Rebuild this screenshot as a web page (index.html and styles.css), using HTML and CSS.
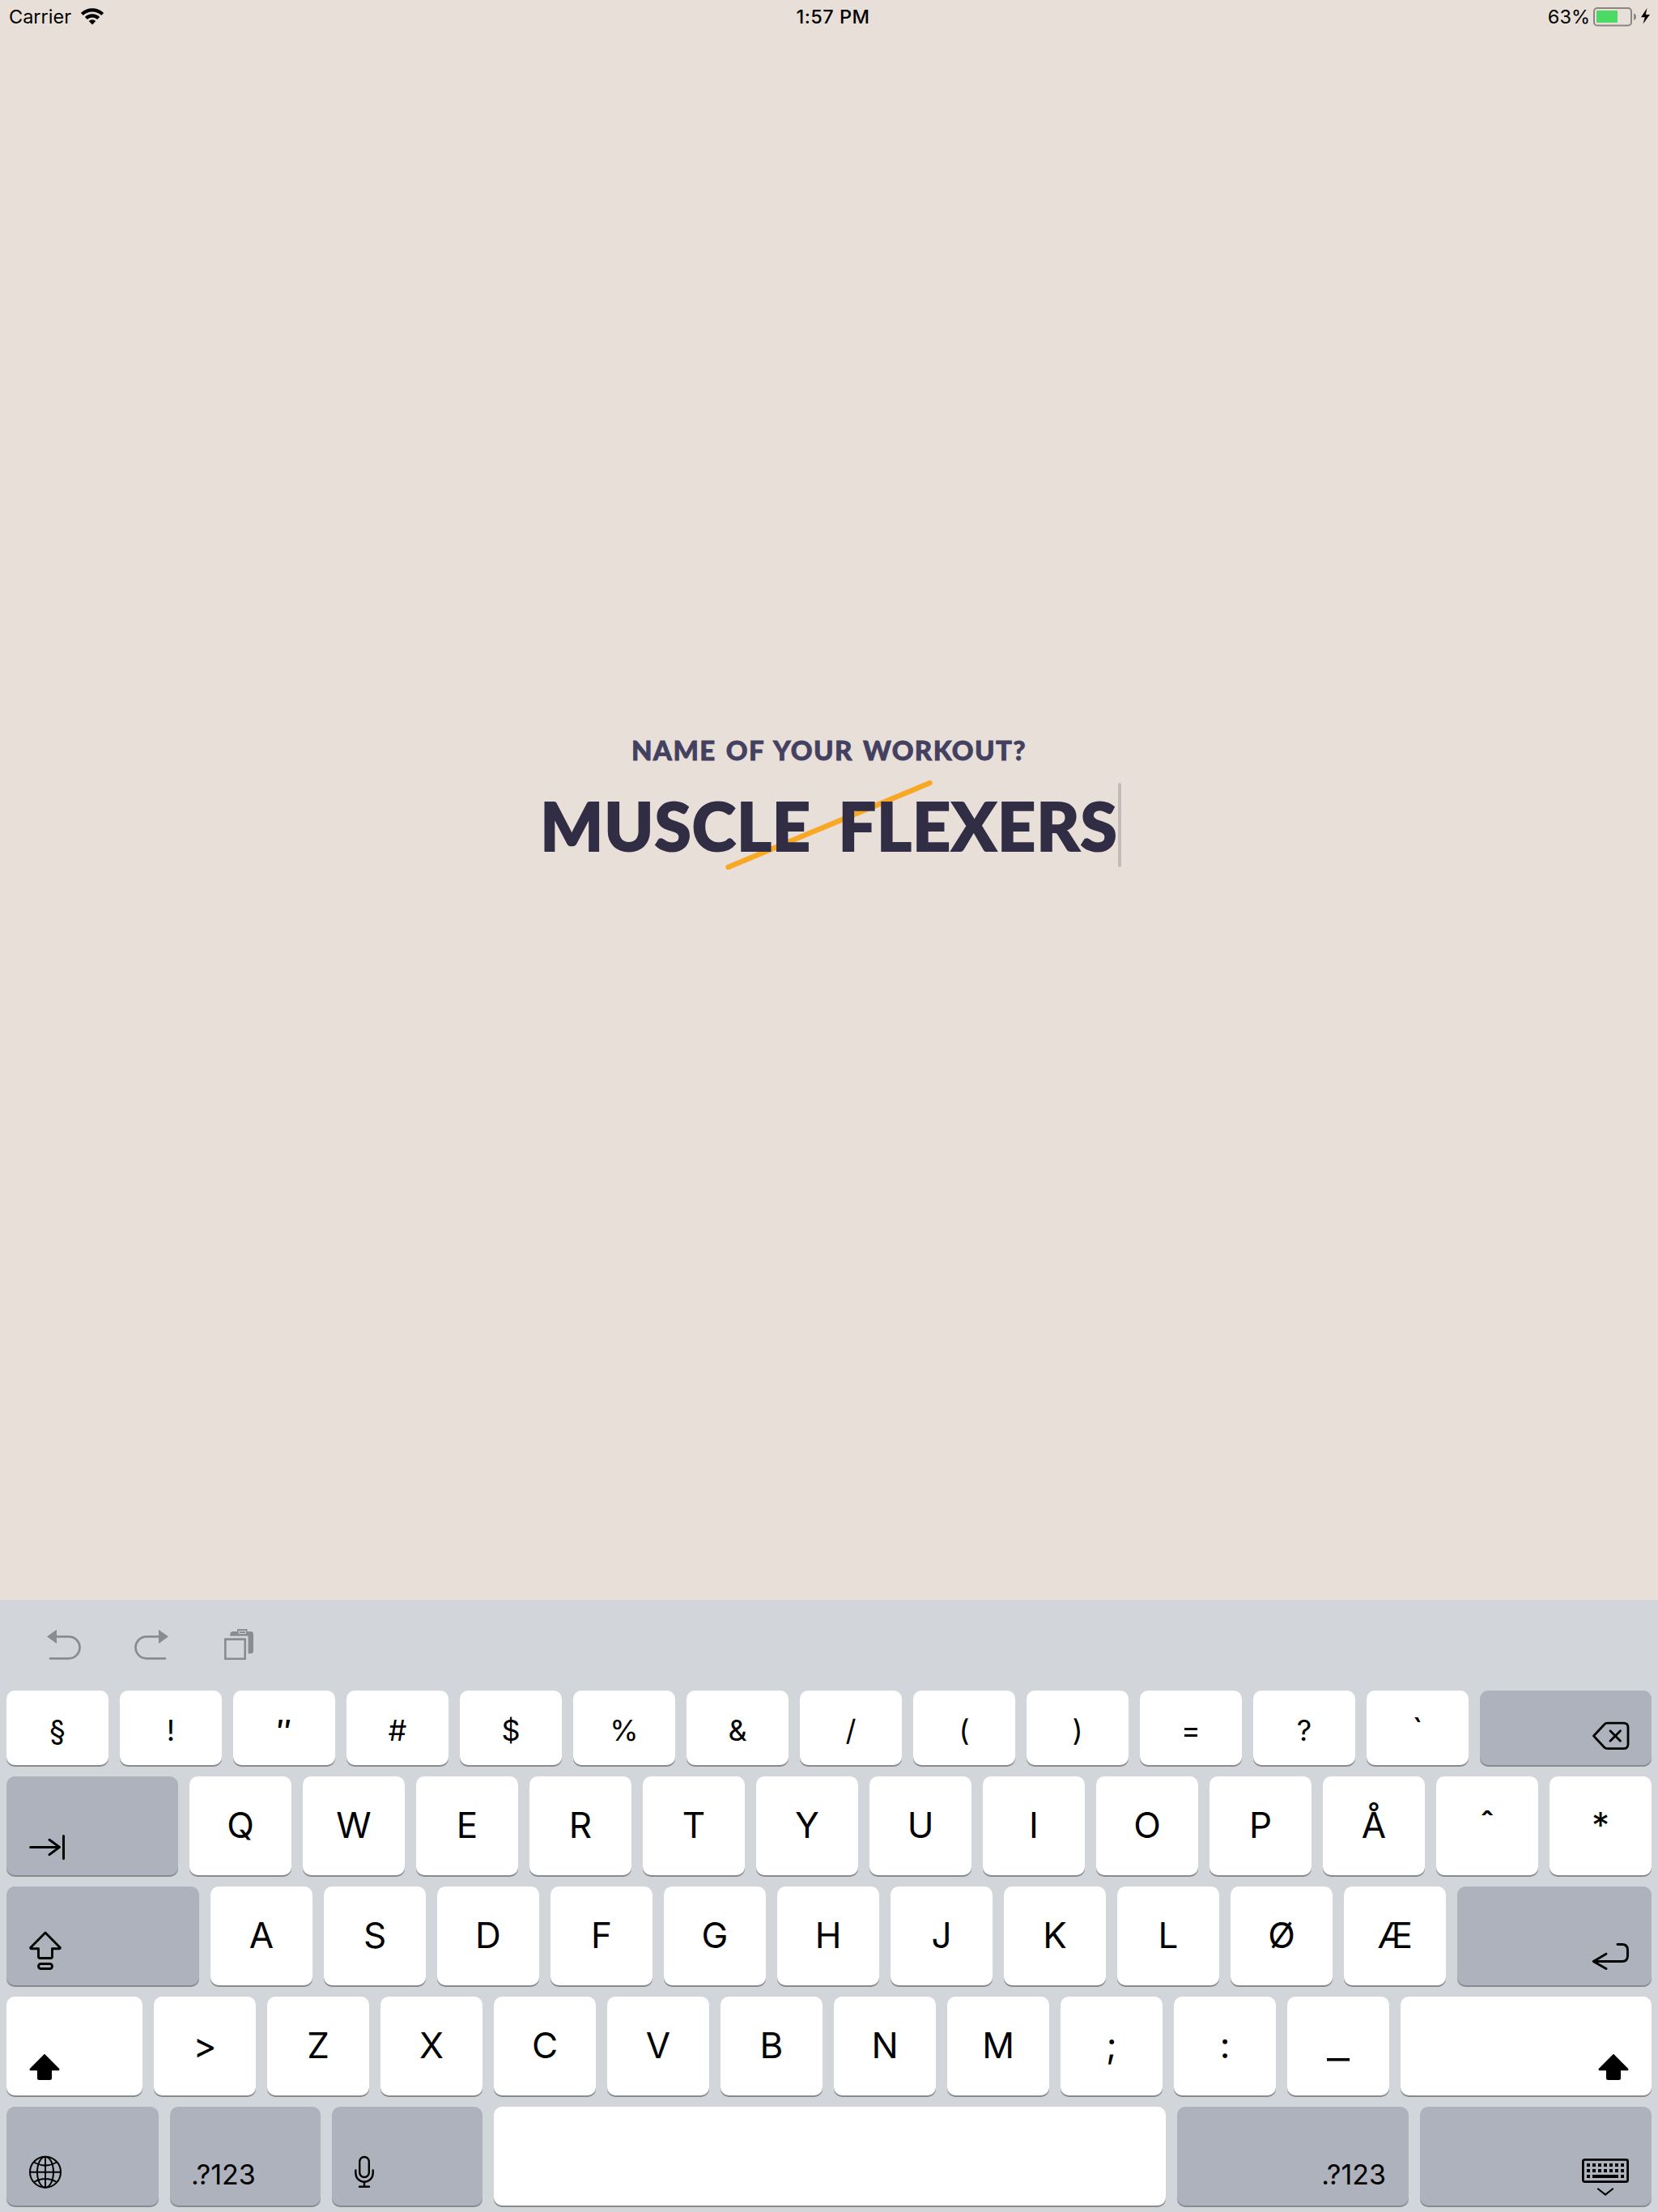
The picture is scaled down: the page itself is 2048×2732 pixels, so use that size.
FILE: index.html
```html
<!DOCTYPE html>
<html lang="en">
<head>
<meta charset="utf-8">
<title>Name of your workout</title>
<link rel="stylesheet" href="styles.css">
</head>
<body>
<div class="screen">
  <header class="status">
    <div class="status-left">
      <span class="carrier">Carrier</span>
      <svg class="wifi" width="28" height="21" viewBox="0 0 28 21"><g fill="none" stroke="#000" stroke-width="4.2"><path d="M1.3 7.6a18 18 0 0 1 25.4 0"/><path d="M6.3 12.6a11 11 0 0 1 15.4 0"/></g><path d="M14 20.4l-4.3-4.3a6.1 6.1 0 0 1 8.6 0z"/></svg>
    </div>
    <div class="time">1:57 PM</div>
    <div class="status-right">
      <span class="percent">63%</span>
      <svg class="battery" width="71" height="24" viewBox="0 0 71 24"><rect x="1" y="1" width="46" height="21.400" rx="4" fill="none" stroke="#8b8583" stroke-width="2"/><rect x="4" y="4" width="26" height="15" rx="1" fill="#4cd964"/><path d="M50 7.500q3 1 3 4.200t-3 4.200z" fill="#8b8583"/><path d="M66.500 1L59 12.200h4.800L61.500 20.500 70 9h-5.200z"/></svg>
    </div>
  </header>

  <main class="workout">
    <h1 class="prompt">NAME OF YOUR WORKOUT?</h1>
    <div class="field">
      <svg class="slash" width="260" height="112" viewBox="0 0 260 112"><path d="M5.600 108L254.500 4" stroke="#f9a825" stroke-width="6.500" stroke-linecap="round"/></svg>
      <span class="value">MUSCLE FLEXERS</span>
      <span class="caret"></span>
    </div>
  </main>

  <section class="keyboard">
    <div class="toolbar">
      <svg width="42" height="38" viewBox="0 0 42 38"><path d="M11 9.300h16a13.500 13.500 0 0 1 0 27H4" fill="none" stroke="#8a8c90" stroke-width="2.700" stroke-linecap="round"/><path d="M0 9.300L12 .7v17.300z" fill="#8a8c90"/></svg>
      <svg width="42" height="38" viewBox="0 0 42 38"><path d="M31 9.300H15a13.500 13.500 0 0 0 0 27h23" fill="none" stroke="#8a8c90" stroke-width="2.700" stroke-linecap="round"/><path d="M42 9.300L30 .7v17.300z" fill="#8a8c90"/></svg>
      <svg class="paste" width="36" height="38" viewBox="0 0 36 38"><path d="M7.300 8.500V6.500q0-3.500 3.500-3.500H32.500q3.500 0 3.500 3.500V27q0 3.300-3.300 3.300H29.500V8.500z" fill="#8a8c90"/><path d="M16 0h12.500v6H16z" fill="#8a8c90"/><path d="M18 2.500h8.600v3H18z" fill="none" stroke="#d2d5da" stroke-width="1"/><path d="M1.300 12.600h24.400v24.100H1.300z" fill="none" stroke="#8a8c90" stroke-width="2.600"/></svg>
    </div>
    <div class="row numbers">
      <div class="key">§</div><div class="key">!</div><div class="key quote">″</div><div class="key">#</div><div class="key">$</div><div class="key">%</div><div class="key">&amp;</div><div class="key">/</div><div class="key">(</div><div class="key">)</div><div class="key">=</div><div class="key">?</div><div class="key grave">`</div>
      <div class="key fn right grow"><svg width="46" height="36" viewBox="0 0 46 36"><g fill="none" stroke="#000" stroke-width="2.800" stroke-linecap="round" stroke-linejoin="round"><path d="M2.500 18L15.600 4Q17.200 2.200 19.500 2.200H39.500Q45 2.200 45 7.700V28.300Q45 33.700 39.500 33.700H19.500Q17.200 33.700 15.600 32z"/><path d="M23 11.700l12.500 12.500M35.500 11.700L23 24.200"/></g></svg></div>
    </div>
    <div class="row">
      <div class="key fn left grow"><svg width="46" height="33" viewBox="0 0 46 33"><g fill="none" stroke="#000" stroke-width="3" stroke-linecap="round" stroke-linejoin="round"><path d="M1.600 16.400h35.500M25 7.300l12.500 9.100L25 25.600M42.500 2.500v28"/></g></svg></div>
      <div class="key">Q</div><div class="key">W</div><div class="key">E</div><div class="key">R</div><div class="key">T</div><div class="key">Y</div><div class="key">U</div><div class="key">I</div><div class="key">O</div><div class="key">P</div><div class="key">Å</div><div class="key">ˆ</div><div class="key">*</div>
    </div>
    <div class="row">
      <div class="key fn left caps"><svg width="40" height="50" viewBox="0 0 40 50"><g fill="none" stroke="#000" stroke-width="2.900" stroke-linecap="round" stroke-linejoin="round"><path d="M20 3L1.700 21.500Q1.500 22.700 3 22.700H11.500V32.500Q11.500 34.500 13.500 34.500H26.500Q28.500 34.500 28.500 32.500V22.700H37Q38.500 22.700 38.300 21.500z"/><rect x="11.500" y="41.500" width="17" height="6" rx="3"/></g></svg></div>
      <div class="key">A</div><div class="key">S</div><div class="key">D</div><div class="key">F</div><div class="key">G</div><div class="key">H</div><div class="key">J</div><div class="key">K</div><div class="key">L</div><div class="key">Ø</div><div class="key">Æ</div>
      <div class="key fn right grow"><svg width="46" height="36" viewBox="0 0 46 36"><g fill="none" stroke="#000" stroke-width="2.900" stroke-linecap="round" stroke-linejoin="round"><path d="M32 3.500h5.500Q44.500 3.500 44.500 10.500V17.500Q44.500 24.500 37.500 24.500H2.500M18 15.200L2.200 24.500 18 33.500"/></g></svg></div>
    </div>
    <div class="row">
      <div class="key left shift"><svg width="38" height="34" viewBox="0 0 38 34"><path d="M19 .7L.8 19Q0 21.200 1.800 21.200H10V30.500Q10 33 12.500 33H25.500Q28 33 28 30.500V21.200H36.200Q38 21.200 37.200 19z"/></svg></div>
      <div class="key">&gt;</div><div class="key">Z</div><div class="key">X</div><div class="key">C</div><div class="key">V</div><div class="key">B</div><div class="key">N</div><div class="key">M</div><div class="key">;</div><div class="key">:</div><div class="key"><span class="underscore">_</span></div>
      <div class="key right grow"><svg width="38" height="34" viewBox="0 0 38 34"><path d="M19 .7L.8 19Q0 21.200 1.800 21.200H10V30.500Q10 33 12.500 33H25.500Q28 33 28 30.500V21.200H36.200Q38 21.200 37.200 19z"/></svg></div>
    </div>
    <div class="row">
      <div class="key fn left globe"><svg width="40" height="42" viewBox="0 0 40 42"><g fill="none" stroke="#000" stroke-width="2"><circle cx="20" cy="20.700" r="19"/><ellipse cx="20" cy="20.700" rx="10" ry="19"/><path d="M20 1.700v38M1 20.700h38M6 8.500q14 8 28 0M6 33q14-8 28 0"/></g></svg></div>
      <div class="key fn left mode">.?123</div>
      <div class="key fn left mode mic"><svg width="24" height="42" viewBox="0 0 24 42"><g fill="none" stroke="#000" stroke-width="2.400" stroke-linecap="round"><rect x="6.200" y="2" width="11.600" height="25" rx="5.800"/><path d="M1.300 18.500v3.500a10.700 10.700 0 0 0 21.400 0v-3.500M12 33v5M6 38.800h12"/></g></svg></div>
      <div class="key grow"></div>
      <div class="key fn right wide">.?123</div>
      <div class="key fn right wide dismiss"><svg width="58" height="46" viewBox="0 0 58 46"><rect x="1.400" y="1.400" width="55.200" height="27.200" rx="2" fill="none" stroke="#000" stroke-width="2.800"/><path d="M6 8h46M6 15h46" stroke="#000" stroke-width="4" stroke-dasharray="4 3"/><path d="M6 22h4M13 22h32M48 22h4" stroke="#000" stroke-width="4"/><path d="M20 37.500l9 7 9-7" fill="none" stroke="#000" stroke-width="2.200" stroke-linecap="round"/></svg></div>
    </div>
  </section>
</div>
</body>
</html>
```
FILE: styles.css
```css
body {
  margin: 0;
}

.screen {
  width: 2048px;
  height: 2732px;
  display: flex;
  flex-direction: column;
  background: #e8dfd9;
  color: #000;
  font-family: Inter, "Liberation Sans", sans-serif;
  overflow: hidden;
}

svg {
  display: block;
  flex: none;
  overflow: visible;
}

.status {
  height: 41px;
  display: grid;
  grid-template-columns: 1fr auto 1fr;
  align-items: center;
  padding: 0 9px 0 11px;
  font-size: 23.5px;
  line-height: 41px;
}

.status-left,
.status-right {
  display: flex;
  align-items: center;
}

.status-left {
  gap: 12px;
}

.status-right {
  justify-content: flex-end;
  gap: 4px;
}

.time {
  margin-left: 8px;
  font-weight: 500;
  letter-spacing: 0.5px;
}

.workout {
  flex: 1;
  display: flex;
  flex-direction: column;
  align-items: center;
  padding-top: 865px;
  font-family: Lato, "Open Sans", sans-serif;
  font-weight: 900;
}

.prompt {
  margin: 0;
  font-size: 33px;
  line-height: 40px;
  letter-spacing: 1.4px;
  word-spacing: 3px;
  font-weight: 900;
  color: #434060;
  -webkit-text-stroke: 0.8px #434060;
  white-space: nowrap;
}

.field {
  position: relative;
  display: flex;
  align-items: center;
  height: 104px;
  margin-top: 21px;
  padding-left: 4px;
}

.value {
  position: relative;
  font-size: 82px;
  line-height: 104px;
  letter-spacing: 1.1px;
  word-spacing: 13px;
  color: #312d45;
  -webkit-text-stroke: 2px #312d45;
  white-space: nowrap;
}

.slash {
  position: absolute;
  left: 231px;
  top: -4px;
}

.caret {
  width: 4px;
  height: 104px;
  border-radius: 2px;
  background: #c5babb;
}

.keyboard {
  height: 756px;
  box-sizing: border-box;
  padding: 0 8px 8px;
  display: flex;
  flex-direction: column;
  gap: 14px;
  background: #d2d5da;
}

.toolbar {
  height: 98px;
  box-sizing: border-box;
  padding: 36px 0 0 50px;
  display: flex;
  gap: 66px;
}

.paste {
  margin-left: 3px;
}

.row {
  display: flex;
  gap: 14px;
  height: 122px;
}

.key {
  flex: none;
  width: 126px;
  box-sizing: border-box;
  display: flex;
  justify-content: center;
  border-radius: 10px;
  background: #fff;
  box-shadow: 0 2px 0 #898a8e;
  font-size: 44px;
  line-height: 121px;
}

.numbers {
  height: 92px;
}

.numbers .key {
  font-size: 36px;
  line-height: 99px;
}

.numbers .quote {
  font-weight: 600;
}

.numbers .grave {
  font-size: 42px;
}

.underscore {
  transform: scaleX(1.4);
}

.key.fn {
  background: #aeb2bc;
}

.key.left,
.key.right {
  align-items: flex-end;
  padding: 0 28px 18px;
  font-size: 34px;
  line-height: 40px;
}

.key.left {
  justify-content: flex-start;
}

.key.right {
  justify-content: flex-end;
}

.key.grow {
  flex: 1;
}

.key.caps {
  width: 238px;
}

.key.shift {
  width: 168px;
}

.key.globe {
  width: 188px;
  padding-bottom: 20px;
}

.key.mode {
  width: 186px;
  padding-left: 26px;
}

.key.mic {
  padding-left: 28px;
  padding-bottom: 20px;
}

.key.wide {
  width: 286px;
}

.key.dismiss {
  padding-bottom: 12px;
}
```
